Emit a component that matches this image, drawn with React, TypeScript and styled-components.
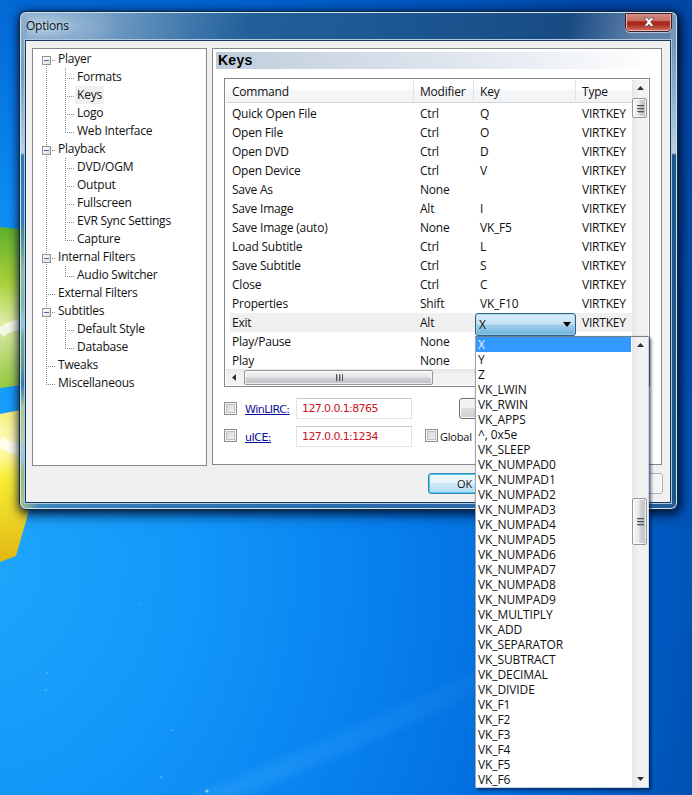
import React from "react";
import styled, { createGlobalStyle, css } from "styled-components";

const Global = createGlobalStyle`
  * { box-sizing: border-box; }
  body { margin: 0; }
`;

const ui = css`
  font-family: "Open Sans", "Noto Sans", sans-serif;
  font-size: 12px;
  font-stretch: 91%;
  letter-spacing: -0.22px;
  white-space: pre;
  color: #111;
`;

const Desktop = styled.main`
  ${ui}
  position: relative;
  width: 692px;
  height: 795px;
  overflow: hidden;
  padding: 11px 0 0 19px;
  background:
    linear-gradient(180deg, rgba(0, 60, 160, 0.25) 0, rgba(0, 60, 160, 0) 200px),
    radial-gradient(ellipse 760px 900px at -20px 560px, #20a6fb 0, #1297fa 28%, #0780ee 53%, #026ddd 72%, #0059c0 90%, #004ca9 100%);
`;

const Wallpaper = styled.svg`
  position: absolute;
  inset: 0;
`;

const Window = styled.section`
  position: relative;
  display: flex;
  flex-direction: column;
  width: 659px;
  height: 499px;
  border: 1px solid #102a40;
  border-radius: 7px;
  padding: 0 5px 5px 4px;
  box-shadow: inset 0 0 0 1px #cfe2f0, 1px 2px 8px 1px rgba(0, 10, 40, 0.85), 2px 5px 14px 2px rgba(0, 10, 40, 0.35);
  background:
    linear-gradient(90deg, #a9c18b 0, #3f87c0 20px, #2e74b4 150px, #2a69ab 400px, #285b93 100%) 0 100% / 100% 7px no-repeat,
    linear-gradient(180deg, #7995b5 0, #7596bc 30px, #91b1d2 85px, #b8d1e8 141px, #1c568d 143px, #1c568d 100%) right / 7px 100% no-repeat,
    linear-gradient(180deg, #92b2cf 0, #759cc2 60px, #b5d3e9 141px, #2b79b5 143px, #2b7fc1 210px, #448e80 222px, #8ebc9d 260px, #79b8a0 290px, #9bc4df 313px, #6faa90 325px, #5e997c 355px, #2c7bb9 372px, #abc78f 395px, #b5ca9e 425px, #a1c7dc 442px, #95b87d 460px, #a9c18b 493px) left / 7px 100% no-repeat,
    radial-gradient(ellipse 75px 24px at 24px 14px, rgba(189, 213, 231, 0.95) 0, rgba(151, 183, 213, 0.6) 50%, transparent 100%),
    linear-gradient(100deg, #8aadcd 0, #759fc6 11%, #5b8cb9 17%, #3c75aa 24%, #226099 31%, #1b5590 55%, #184b82 74%, #5c7ea7 83%, #718eaf 100%);
`;

const TitleBar = styled.header`
  display: flex;
  justify-content: space-between;
  height: 27px;
  flex: none;
  padding: 0 0 0 2px;
`;
const Title = styled.h1`
  margin: 0;
  font-size: 12px;
  font-weight: 400;
  line-height: 28px;
`;
const CloseButton = styled.button`
  display: grid;
  place-items: center;
  width: 47px;
  height: 19px;
  margin-top: 1px;
  padding: 0;
  border: 1px solid #f0c6c4;
  border-top: 0;
  border-radius: 0 0 5px 5px;
  outline: 1px solid #3c2030;
  outline-offset: -1px;
  box-shadow: inset 0 0 0 1px #e7b3af, 0 1px 0 #bcc8d7;
  background: linear-gradient(#d6918a 0, #c96d62 44%, #a9271b 48%, #a92c1d 65%, #d47561 100%);
`;

const Client = styled.div`
  flex: 1;
  display: flex;
  flex-direction: column;
  min-height: 0;
  border: 1px solid #acc6dc;
  box-shadow: inset 0 0 0 1px #173b61;
  background: #f0f0f0;
  padding: 8px 8px 8px 7px;
`;
const Panels = styled.div`
  display: flex;
  align-items: flex-start;
  gap: 5px;
  height: 424px;
`;

/* Tree */
const TreePanel = styled.nav`
  width: 175px;
  height: 418px;
  border: 1px solid #828790;
  background: #fff;
  padding: 1px 0 0 9px;
`;
const TreeRow = styled.div`
  display: flex;
  height: 18px;
`;
const dotsY = "repeating-linear-gradient(180deg,#8a8a8a 0 1px,transparent 1px 2px)";
const dotsX = "repeating-linear-gradient(90deg,#8a8a8a 0 1px,transparent 1px 2px)";
const Guide = styled.span<{ $top?: boolean; $bottom?: boolean; $arm?: boolean; $w: number }>`
  flex: none;
  width: ${p => p.$w}px;
  height: 18px;
  background:
    ${p => (p.$top ? `${dotsY} 4px 0 / 1px 10px no-repeat,` : "")}
    ${p => (p.$bottom ? `${dotsY} 4px 10px / 1px 8px no-repeat,` : "")}
    ${p => (p.$arm ? `${dotsX} 4px 10px / 9px 1px no-repeat,` : "")}
    linear-gradient(transparent, transparent);
`;
const Expander = styled.span`
  display: block;
  width: 9px;
  height: 9px;
  margin-top: 6px;
  border: 1px solid #919191;
  background: linear-gradient(#4b63a7, #4b63a7) 1px 3px / 5px 1px no-repeat, linear-gradient(135deg, #fff, #ddd);
`;
const TreeLabel = styled.span<{ $on?: boolean }>`
  line-height: 17px;
  padding: 0 2px;
  margin-left: -2px;
  background: ${p => (p.$on ? "#f0f0f0" : "none")};
`;

/* Keys page */
const Page = styled.section`
  width: 450px;
  height: 417px;
  border: 1px solid #828790;
  background: #fff;
  padding: 3px 1px 0 3px;
`;
const Banner = styled.h2`
  margin: 0 0 9px;
  height: 17px;
  padding-left: 2px;
  font: 700 14px/17px "Liberation Sans", sans-serif;
  letter-spacing: 0.25px;
  color: #000;
  background: linear-gradient(90deg, #bfcddb, #e0e6ef 55%, #fff);
`;
const ListBox = styled.div`
  width: 426px;
  height: 309px;
  margin-left: 8px;
  border: 1px solid #828790;
  padding: 1px;
  display: grid;
  grid-template-columns: 406px 16px;
  grid-template-rows: 289px 16px;
`;
const Table = styled.div`
  overflow: hidden;
`;
const columns = "188px 60px 102px 1fr";
const HeadRow = styled.div`
  display: grid;
  grid-template-columns: ${columns};
  height: 23px;
  margin-bottom: 1px;
  border-bottom: 1px solid #d5d5d5;
  background: linear-gradient(#fff 0 40%, #f7f8fa 45%, #f1f2f4);
`;
const HeadCell = styled.span`
  padding-left: 6px;
  line-height: 23px;
  border-right: 1px solid #dfe3e8;
  &:last-child { border: 0; }
`;
const Row = styled.div<{ $on?: boolean }>`
  display: grid;
  grid-template-columns: ${columns};
  height: 19px;
  line-height: 19px;
  background: ${p => (p.$on ? "linear-gradient(#f0f0f0,#f0f0f0) 4px 0 no-repeat" : "none")};
`;
const Cell = styled.span`
  padding-left: 6px;
`;
const VScroll = styled.div`
  display: flex;
  flex-direction: column;
  align-items: flex-start;
  width: 16px;
  background: linear-gradient(90deg, #e6e6e6, #f1f1f1 40%, #f2f2f2);
`;
const HScroll = styled.div`
  display: flex;
  align-items: center;
  background: linear-gradient(#e6e6e6, #f1f1f1 40%, #f2f2f2);
`;
const Arrow = styled.span`
  width: 16px;
  height: 16px;
  flex: none;
  display: grid;
  place-items: center;
`;
const Thumb = styled.span<{ $w: number; $h: number; $horizontal?: boolean; $offset?: number; $start?: number }>`
  display: grid;
  place-items: center;
  width: ${p => p.$w}px;
  height: ${p => p.$h}px;
  margin-top: ${p => p.$offset ?? 0}px;
  margin-left: ${p => p.$start ?? 0}px;
  border: 1px solid #979797;
  border-radius: 2px;
  box-shadow: inset 0 0 0 1px rgba(255, 255, 255, 0.7);
  background: linear-gradient(${p => (p.$horizontal ? "180deg" : "90deg")}, #f6f6f6 0, #e7e7e9 48%, #d2d3d6 52%, #bfc0c4 100%);
`;
const Corner = styled.span`
  background: #f0f0f0;
`;

/* Remote options */
const Options = styled.div`
  display: grid;
  grid-template-columns: 21px 51px 116px 13px 1fr;
  grid-template-rows: 21px 21px;
  row-gap: 7px;
  margin: 11px 0 0 8px;
  align-items: center;
  font-family: "DejaVu Sans", sans-serif;
  font-size: 11px;
  font-stretch: 100%;
  letter-spacing: -0.6px;
`;
const Check = styled.span<{ $raised?: boolean }>`
  width: 13px;
  height: 13px;
  flex: none;
  margin-bottom: ${p => (p.$raised ? 2 : 0)}px;
  border: 1px solid #8e8f8f;
  box-shadow: inset 0 0 0 1px #f4f4f4, inset 0 0 0 2px #bfc3c8;
  background: linear-gradient(135deg, #cfd2d7, #f7f7f7);
`;
const Link = styled.a`
  color: #0b0b9a;
  text-decoration: underline;
  padding-top: 2px;
  letter-spacing: -0.5px;
`;
const Field = styled.div`
  height: 21px;
  border: 1px solid #e2e3ea;
  border-top-color: #c5c9d0;
  padding-left: 5px;
  line-height: 19px;
  color: #c8141e;
`;
const GlobalKeys = styled.label`
  display: flex;
  align-items: center;
  gap: 2px;
  width: 50px;
  overflow: hidden;
  font-family: "Open Sans", sans-serif;
  font-size: 11px;
  font-stretch: 91%;
  letter-spacing: -0.2px;
`;
const Button = styled.button<{ $primary?: boolean; $w: number; $push?: number; $disabled?: boolean }>`
  ${ui}
  font-size: 11px;
  width: ${p => p.$w}px;
  height: 21px;
  margin-left: ${p => p.$push ?? 0}px;
  padding: 0;
  border: 1px solid ${p => (p.$primary ? "#3c7fb1" : p.$disabled ? "#adb2b5" : "#707070")};
  border-radius: 3px;
  box-shadow: inset 0 0 0 ${p => (p.$primary ? "1px #49cdf2" : "1px #fafafa")};
  background: ${p => (p.$primary ? "linear-gradient(#e9f6fc 0 48%,#cfe9f6 50%,#b5dcef)" : p.$disabled ? "#f4f4f4" : "linear-gradient(#f2f2f2 0 48%,#dddddd 50%,#cfcfcf)")};
`;
const Actions = styled.footer`
  display: flex;
  justify-content: flex-end;
  gap: 8px;
  margin-top: 1px;
`;

/* Key selector, floating over the list */
const Combo = styled.div`
  position: absolute;
  left: 475px;
  top: 313px;
  width: 101px;
  height: 23px;
  display: flex;
  align-items: center;
  justify-content: space-between;
  padding: 0 4px 0 3px;
  border: 1px solid #2c628b;
  border-radius: 3px;
  box-shadow: inset 0 0 0 1px rgba(170, 210, 232, 0.7);
  background: linear-gradient(#d9edf8 0, #c5e3f4 48%, #a0cfe9 52%, #6cb3da 100%);
`;
const Popup = styled.div`
  position: absolute;
  left: 475px;
  top: 336px;
  width: 174px;
  height: 452px;
  display: flex;
  justify-content: space-between;
  border: 1px solid #8b929b;
  border-color: #777e86 #c4d4e4 #c4d4e4 #98a6b4;
  background: #fff;
  box-shadow: 2px 2px 3px rgba(0, 15, 50, 0.65);
`;
const Items = styled.div`
  width: 155px;
  letter-spacing: -0.1px;
`;
const Item = styled.div<{ $on?: boolean }>`
  height: 15px;
  line-height: 15px;
  padding-left: 2px;
  color: ${p => (p.$on ? "#e8f4ff" : "#111")};
  background: ${p => (p.$on ? "#3399ff" : "none")};
`;
const Spacer = styled.span`
  flex: 1;
`;

type Node = { label: string; children?: string[] };
const tree: Node[] = [
  { label: "Player", children: ["Formats", "Keys", "Logo", "Web Interface"] },
  { label: "Playback", children: ["DVD/OGM", "Output", "Fullscreen", "EVR Sync Settings", "Capture"] },
  { label: "Internal Filters", children: ["Audio Switcher"] },
  { label: "External Filters" },
  { label: "Subtitles", children: ["Default Style", "Database"] },
  { label: "Tweaks" },
  { label: "Miscellaneous" },
];

const V = "VIRTKEY";
const commands: [string, string, string, string][] = [
  ["Quick Open File", "Ctrl", "Q", V],
  ["Open File", "Ctrl", "O", V],
  ["Open DVD", "Ctrl", "D", V],
  ["Open Device", "Ctrl", "V", V],
  ["Save As", "None", "", V],
  ["Save Image", "Alt", "I", V],
  ["Save Image (auto)", "None", "VK_F5", V],
  ["Load Subtitle", "Ctrl", "L", V],
  ["Save Subtitle", "Ctrl", "S", V],
  ["Close", "Ctrl", "C", V],
  ["Properties", "Shift", "VK_F10", V],
  ["Exit", "Alt", "", V],
  ["Play/Pause", "None", "", ""],
  ["Play", "None", "", ""],
];

const keys = [
  "X", "Y", "Z", "VK_LWIN", "VK_RWIN", "VK_APPS", "^, 0x5e", "VK_SLEEP",
  ...Array.from({ length: 10 }, (_, i) => `VK_NUMPAD${i}`),
  "VK_MULTIPLY", "VK_ADD", "VK_SEPARATOR", "VK_SUBTRACT", "VK_DECIMAL", "VK_DIVIDE",
  "VK_F1", "VK_F2", "VK_F3", "VK_F4", "VK_F5", "VK_F6",
];

const arrows = { up: "M0 4 3.5 0 7 4Z", down: "M0 0h7L3.5 4Z", left: "M4 0v7L0 3.5Z" };
const ArrowIcon = ({ dir, wide }: { dir: keyof typeof arrows; wide?: boolean }) => (
  <svg
    width={dir === "left" ? 4 : wide ? 8 : 7}
    height={dir === "left" ? 7 : wide ? 5 : 4}
    viewBox={dir === "left" ? "0 0 4 7" : "0 0 7 4"}
    preserveAspectRatio="none"
  >
    <path d={arrows[dir]} fill={wide ? "#000" : "#303030"} />
  </svg>
);
const Grip = ({ vertical }: { vertical?: boolean }) => (
  <svg width="8" height="9" shapeRendering="crispEdges">
    <path d={vertical ? "M1 0v7M4 0v7M7 0v7" : "M0 1h7M0 4h7M0 7h7"} transform="translate(.5 .5)" stroke="#505458" />
    <path d={vertical ? "M2 1v7M5 1v7" : "M1 2h7M1 5h7M1 8h7"} transform="translate(.5 .5)" stroke="#8f9397" opacity=".6" />
  </svg>
);

function Tree() {
  return (
    <TreePanel>
      {tree.map((node, i) => {
        const last = i === tree.length - 1;
        return (
          <React.Fragment key={node.label}>
            <TreeRow>
              <Guide $w={16} $top={i > 0} $bottom={!last} $arm>
                {node.children && <Expander />}
              </Guide>
              <TreeLabel>{node.label}</TreeLabel>
            </TreeRow>
            {node.children?.map((child, c) => (
              <TreeRow key={child}>
                <Guide $w={19} $top $bottom />
                <Guide $w={16} $top $bottom={c < node.children!.length - 1} $arm />
                <TreeLabel $on={child === "Keys"}>{child}</TreeLabel>
              </TreeRow>
            ))}
          </React.Fragment>
        );
      })}
    </TreePanel>
  );
}

function CommandList() {
  return (
    <ListBox>
      <Table>
        <HeadRow>
          {["Command", "Modifier", "Key", "Type"].map(h => <HeadCell key={h}>{h}</HeadCell>)}
        </HeadRow>
        {commands.map(([name, mod, key, type]) => (
          <Row key={name} $on={name === "Exit"}>
            <Cell>{name}</Cell><Cell>{mod}</Cell><Cell>{key}</Cell><Cell>{type}</Cell>
          </Row>
        ))}
      </Table>
      <VScroll>
        <Arrow><ArrowIcon dir="up" /></Arrow>
        <Thumb $w={15} $h={20} $offset={2}><Grip /></Thumb>
      </VScroll>
      <HScroll>
        <Arrow><ArrowIcon dir="left" /></Arrow>
        <Thumb $w={189} $h={15} $start={2} $horizontal><Grip vertical /></Thumb>
      </HScroll>
      <Corner />
    </ListBox>
  );
}

export default function App() {
  return (
    <Desktop>
      <Global />
      <Wallpaper width="692" height="795" viewBox="0 0 692 795">
        <defs>
          <linearGradient id="green" x1="0" y1="0" x2="0" y2="1">
            <stop offset="0" stopColor="#5fae2b" /><stop offset=".35" stopColor="#a9d23c" />
            <stop offset=".6" stopColor="#e0eda8" /><stop offset=".85" stopColor="#acd366" /><stop offset="1" stopColor="#98ca43" />
          </linearGradient>
          <linearGradient id="yellow" x1="0" y1="0" x2="0" y2="1">
            <stop offset="0" stopColor="#f4f07c" /><stop offset=".25" stopColor="#fffbc0" />
            <stop offset=".45" stopColor="#f8ee38" /><stop offset="1" stopColor="#e0b810" />
          </linearGradient>
          <linearGradient id="beam" x1="0" y1="1" x2="1" y2="0">
            <stop offset="0" stopColor="#57bbff" stopOpacity=".4" /><stop offset="1" stopColor="#57bbff" stopOpacity=".08" />
          </linearGradient>
          <filter id="soft"><feGaussianBlur stdDeviation="5" /></filter>
        </defs>
        <path d="M0 227 28 230V384L0 388Z" fill="url(#green)" />
        <path d="M0 414 30 408V507L16 556 0 562Z" fill="url(#yellow)" />
        <path d="M0 333Q10 325 26 323M0 441Q10 449 26 451" stroke="#fff" strokeOpacity=".72" strokeWidth="10" fill="none" />
        <path d="M185 800Q340 735 500 660V680Q360 750 230 800Z" fill="url(#beam)" filter="url(#soft)" opacity=".6" />
        <g fill="#8bd0ff">
          <circle cx="207" cy="791" r="1.6" /><circle cx="161" cy="777" r="1" opacity=".6" />
          <circle cx="172" cy="730" r="1" opacity=".5" /><circle cx="47" cy="673" r="1" opacity=".5" />
          <circle cx="46" cy="690" r="1" opacity=".5" /><circle cx="141" cy="604" r="1" opacity=".3" />
        </g>
      </Wallpaper>

      <Window>
        <TitleBar>
          <Title>Options</Title>
          <CloseButton aria-label="Close">
            <svg width="12" height="10" viewBox="0 0 12 10">
              <path d="M1 .7h3.2L6 2.8 7.800 .7H11L7.700 5 11 9.300H7.800L6 7.200 4.200 9.300H1L4.300 5Z" fill="#fff" stroke="#5b3b40" strokeWidth=".7" />
            </svg>
          </CloseButton>
        </TitleBar>
        <Client>
          <Panels>
            <Tree />
            <Page>
              <Banner>Keys</Banner>
              <CommandList />
              <Options>
                <Check /><Link>WinLIRC:</Link><Field>127.0.0.1:8765</Field><span />
                <Button $w={75} $push={34} />
                <Check $raised /><Link>uICE:</Link><Field>127.0.0.1:1234</Field><span />
                <GlobalKeys><Check $raised />Global M</GlobalKeys>
              </Options>
            </Page>
          </Panels>
          <Actions>
            <Button $w={73} $primary>OK</Button>
            <Button $w={73} />
            <Button $w={73} $disabled />
          </Actions>
        </Client>
      </Window>

      <Popup>
        <Items>
          {keys.map(k => <Item key={k} $on={k === "X"}>{k}</Item>)}
        </Items>
        <VScroll>
          <Arrow><ArrowIcon dir="up" /></Arrow>
          <Thumb $w={15} $h={47} $offset={145}><Grip /></Thumb>
          <Spacer />
          <Arrow><ArrowIcon dir="down" /></Arrow>
        </VScroll>
      </Popup>
      <Combo>
        X
        <ArrowIcon dir="down" wide />
      </Combo>
    </Desktop>
  );
}
